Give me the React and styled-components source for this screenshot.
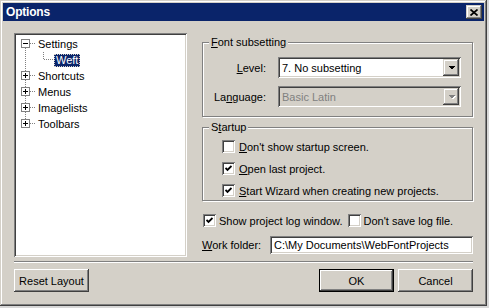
import styled, { createGlobalStyle, css } from 'styled-components';

const GlobalStyle = createGlobalStyle`
  body {
    margin: 0;
    background: #d8d8d8;
    font-family: "Liberation Sans", Arial, sans-serif;
    font-size: 11px;
    color: #000;
  }
  * { box-sizing: border-box; }
`;

const raised = css`
  background: #d4d0c8;
  box-shadow: inset -1px -1px #404040, inset 1px 1px #d4d0c8,
    inset -2px -2px #808080, inset 2px 2px #fff;
`;

const sunken = css`
  box-shadow: inset 1px 1px #808080, inset -1px -1px #fff,
    inset 2px 2px #404040, inset -2px -2px #d4d0c8;
`;

const treeItems = [
  { label: 'Settings', cols: [{ box: 'minus', down: true, right: true }] },
  {
    label: 'Weft',
    selected: true,
    cols: [{ up: true, down: true }, { up: true, right: true }],
  },
  { label: 'Shortcuts', cols: [{ box: 'plus', up: true, down: true, right: true }] },
  { label: 'Menus', cols: [{ box: 'plus', up: true, down: true, right: true }] },
  { label: 'Imagelists', cols: [{ box: 'plus', up: true, down: true, right: true }] },
  { label: 'Toolbars', cols: [{ box: 'plus', up: true, right: true }] },
];

const Gutter = ({ box, up, down, right }) => {
  const dot = { stroke: '#808080', strokeDasharray: '1 1', shapeRendering: 'crispEdges' };
  return (
    <GutterSvg width="18" height="16" viewBox="0 0 18 16">
      {up && <line x1="8.5" y1="0" x2="8.5" y2={box ? 3 : 8} {...dot} />}
      {down && <line x1="8.5" y1={box ? 12 : 8} x2="8.5" y2="16" {...dot} />}
      {right && <line x1={box ? 13 : 9} y1="7.5" x2="18" y2="7.5" {...dot} />}
      {box && (
        <g shapeRendering="crispEdges">
          <rect x="4.5" y="3.5" width="8" height="8" fill="#fff" stroke="#808080" />
          <line x1="6" y1="7.5" x2="11" y2="7.5" stroke="#000" />
          {box === 'plus' && <line x1="8.5" y1="5" x2="8.5" y2="10" stroke="#000" />}
        </g>
      )}
    </GutterSvg>
  );
};

const Arrow = ({ disabled }) => (
  <svg width="8" height="5" viewBox="0 0 8 5" shapeRendering="crispEdges">
    {disabled && <polygon points="1,1 8,1 4.5,4.5" fill="#fff" />}
    <polygon points="0,0 7,0 3.5,3.5" fill={disabled ? '#808080' : '#000'} />
  </svg>
);

const Check = () => (
  <svg width="7" height="7" viewBox="0 0 7 7">
    <polyline points="0.5,3 2.5,5 6.5,1" fill="none" stroke="#000" strokeWidth="1.8" />
  </svg>
);

const CheckOption = ({ checked, children, indent }) => (
  <CheckRow $indent={indent}>
    <CheckBox>{checked && <Check />}</CheckBox>
    <span>{children}</span>
  </CheckRow>
);

const App = () => (
  <>
    <GlobalStyle />
    <Window>
      <TitleBar>
        <TitleText>Options</TitleText>
        <CloseButton>
          <svg width="8" height="7" viewBox="0 0 8 7">
            <path d="M0.5 0.5 L7.5 6.5 M7.5 0.5 L0.5 6.5" stroke="#000" strokeWidth="1.7" />
          </svg>
        </CloseButton>
      </TitleBar>

      <Content>
        <Main>
          <Tree>
            {treeItems.map((item) => (
              <TreeRow key={item.label}>
                {item.cols.map((col, i) => (
                  <Gutter key={i} {...col} />
                ))}
                <TreeLabel $selected={item.selected}>{item.label}</TreeLabel>
              </TreeRow>
            ))}
          </Tree>

          <RightPanel>
            <Group $pad="8px 10px 9px 6px">
              <Legend>
                <u>F</u>ont subsetting
              </Legend>
              <FieldGrid>
                <FieldLabel>
                  <u>L</u>evel:
                </FieldLabel>
                <Combo>
                  <ComboText>7. No subsetting</ComboText>
                  <DropButton>
                    <Arrow />
                  </DropButton>
                </Combo>
                <FieldLabel>
                  La<u>n</u>guage:
                </FieldLabel>
                <Combo $disabled>
                  <ComboText $disabled>Basic Latin</ComboText>
                  <DropButton>
                    <Arrow disabled />
                  </DropButton>
                </Combo>
              </FieldGrid>
            </Group>

            <Group $gapTop $pad="6px 10px 3px 6px">
              <Legend>
                S<u>t</u>artup
              </Legend>
              <CheckList>
                <CheckOption indent>
                  <u>D</u>on't show startup screen.
                </CheckOption>
                <CheckOption checked indent>
                  <u>O</u>pen last project.
                </CheckOption>
                <CheckOption checked indent>
                  <u>S</u>tart Wizard when creating new projects.
                </CheckOption>
              </CheckList>
            </Group>

            <LogRow>
              <CheckOption checked>Show project log window.</CheckOption>
              <CheckOption>Don't save log file.</CheckOption>
            </LogRow>

            <FolderRow>
              <FolderLabel>
                <u>W</u>ork folder:
              </FolderLabel>
              <TextInput>C:\My Documents\WebFontProjects</TextInput>
            </FolderRow>
          </RightPanel>
        </Main>

        <Separator />

        <ButtonRow>
          <Button>Reset Layout</Button>
          <ButtonGroup>
            <Button $default>OK</Button>
            <Button>Cancel</Button>
          </ButtonGroup>
        </ButtonRow>
      </Content>
    </Window>
  </>
);

const Window = styled.div`
  width: 487px;
  height: 306px;
  padding: 3px;
  background: #d4d0c8;
  box-shadow: inset -1px -1px #404040, inset 1px 1px #d4d0c8,
    inset -2px -2px #808080, inset 2px 2px #fff;
  display: flex;
  flex-direction: column;
`;

const TitleBar = styled.div`
  height: 18px;
  background: #0a246a;
  color: #fff;
  display: flex;
  align-items: center;
  justify-content: space-between;
  padding: 0 2px 0 3px;
`;

const TitleText = styled.span`
  font-weight: bold;
  font-size: 12px;
  letter-spacing: -0.2px;
`;

const CloseButton = styled.div`
  ${raised};
  width: 16px;
  height: 14px;
  display: flex;
  align-items: center;
  justify-content: center;
  padding-right: 1px;
`;

const Content = styled.div`
  flex: 1;
  display: flex;
  flex-direction: column;
  padding: 12px 11px 0 11px;
`;

const Main = styled.div`
  display: flex;
  gap: 15px;
  height: 224px;
`;

const Tree = styled.div`
  width: 173px;
  background: #fff;
  ${sunken};
  padding: 3px 0 0 3px;
`;

const TreeRow = styled.div`
  display: flex;
  align-items: center;
  height: 16px;
`;

const GutterSvg = styled.svg`
  flex: none;
  display: block;
`;

const TreeLabel = styled.span`
  line-height: 13px;
  padding: 0 2px;
  margin-left: 1px;
  ${(p) =>
    p.$selected &&
    css`
      background: #0a246a;
      color: #fff;
      outline: 1px dotted #d4d0c8;
      outline-offset: -1px;
    `}
`;

const RightPanel = styled.div`
  width: 271px;
  display: flex;
  flex-direction: column;
  padding-top: 3px;
`;

const Group = styled.fieldset`
  margin: ${(p) => (p.$gapTop ? '4px' : '0')} 0 0 0;
  padding: ${(p) => p.$pad};
  border: 1px solid #808080;
  box-shadow: 1px 1px 0 #fff, inset 1px 1px 0 #fff;
  min-width: 0;
`;

const Legend = styled.legend`
  padding: 0 2px;
  line-height: 13px;
  background: #d4d0c8;
`;

const FieldGrid = styled.div`
  display: grid;
  grid-template-columns: 57px 183px;
  column-gap: 12px;
  row-gap: 8px;
  align-items: center;
`;

const FieldLabel = styled.span`
  text-align: right;
`;

const Combo = styled.div`
  height: 21px;
  padding: 2px;
  display: flex;
  align-items: stretch;
  background: ${(p) => (p.$disabled ? '#d4d0c8' : '#fff')};
  ${sunken};
`;

const ComboText = styled.span`
  flex: 1;
  display: flex;
  align-items: center;
  padding-left: 2px;
  color: ${(p) => (p.$disabled ? '#808080' : '#000')};
`;

const DropButton = styled.div`
  ${raised};
  width: 16px;
  display: flex;
  align-items: center;
  justify-content: center;
  padding: 1px 0 0 1px;
`;

const CheckList = styled.div`
  display: flex;
  flex-direction: column;
  gap: 9px;
`;

const CheckRow = styled.label`
  display: flex;
  align-items: center;
  gap: ${(p) => (p.$indent ? '4px' : '3px')};
  height: 13px;
  margin-left: ${(p) => (p.$indent ? '13px' : '0')};
  white-space: nowrap;
`;

const CheckBox = styled.span`
  width: 13px;
  height: 13px;
  flex: none;
  background: #fff;
  ${sunken};
  display: flex;
  align-items: center;
  justify-content: center;
`;

const LogRow = styled.div`
  display: flex;
  gap: 5px;
  margin-top: 13px;
  padding-left: 1px;
`;

const FolderRow = styled.div`
  display: flex;
  align-items: center;
  margin-top: 9px;
`;

const FolderLabel = styled.span`
  width: 68px;
  flex: none;
`;

const TextInput = styled.div`
  flex: 1;
  height: 18px;
  background: #fff;
  ${sunken};
  display: flex;
  align-items: center;
  padding-left: 4px;
  white-space: nowrap;
`;

const Separator = styled.div`
  margin-top: 4px;
  border-top: 1px solid #808080;
  border-bottom: 1px solid #fff;
`;

const ButtonRow = styled.div`
  display: flex;
  justify-content: space-between;
  margin-top: 6px;
`;

const ButtonGroup = styled.div`
  display: flex;
  gap: 4px;
`;

const Button = styled.div`
  width: 75px;
  height: 23px;
  display: flex;
  align-items: center;
  justify-content: center;
  background: #d4d0c8;
  box-shadow: ${(p) =>
    p.$default
      ? 'inset 0 0 0 1px #000, inset -2px -2px #404040, inset 2px 2px #fff, inset -3px -3px #808080'
      : 'inset -1px -1px #404040, inset 1px 1px #fff, inset -2px -2px #808080'};
`;

export default App;
